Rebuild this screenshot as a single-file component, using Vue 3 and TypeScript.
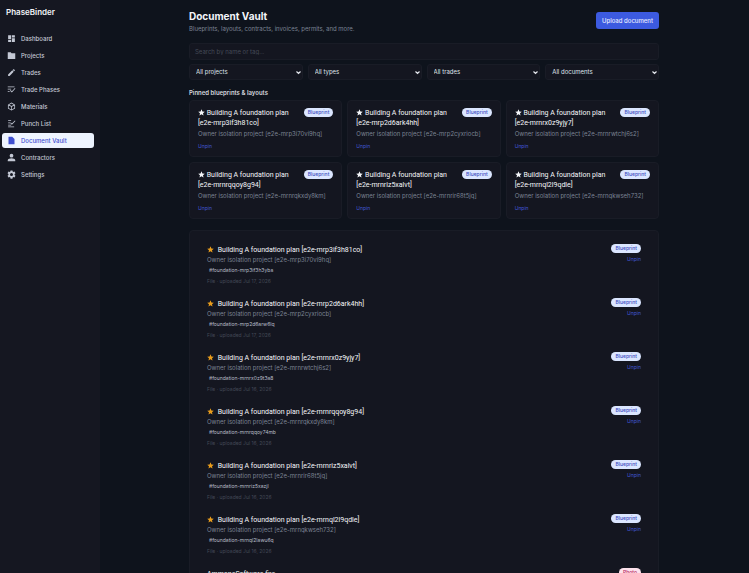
<script setup lang="ts">
import { ref } from 'vue'

interface NavItem {
  label: string
  paths: string[]
}

interface VaultDocument {
  name: string
  project: string
  tag: string
  uploaded: string
  kind: string
  pinned: boolean
}

const navItems: NavItem[] = [
  { label: 'Dashboard', paths: ['M3 13h8V3H3v10zm0 8h8v-6H3v6zm10 0h8V11h-8v10zm0-18v6h8V3h-8z'] },
  { label: 'Projects', paths: ['M2 3h8l2 3h10v15H2z'] },
  { label: 'Trades', paths: ['M3 17.2V21h3.800L17.800 9.900l-3.700-3.700L3 17.200zM20.700 7c.4-.4.4-1 0-1.400l-2.300-2.300c-.4-.4-1-.4-1.400 0l-1.800 1.800 3.700 3.700L20.700 7z'] },
  { label: 'Trade Phases', paths: ['M2 4h18v2H2zM2 10h9v2H2zM2 16h5v2H2zM21 8l1.500 1.500L13 20l-5-5 1.500-1.500 3.500 3.300z'] },
  { label: 'Materials', paths: ['M12 1.500 21.500 7v10.500L12 22.800 2.500 17.500V7zM12 3.900 6 7.300l6 3.400 6-3.400zM4.500 9v7.300l6.500 3.700v-7.300zM19.500 9 13 12.700V20l6.500-3.700z'] },
  { label: 'Punch List', paths: ['M3 3h8v2H3zM3 9h6v2H3zM3 15h8v2H3zM3 20h16v2H3zM21 4l1.500 1.500L13 15l-4-4 1.500-1.500 2.500 2.400z'] },
  { label: 'Document Vault', paths: ['M4 2h10l6 6v14H4z'] },
  { label: 'Contractors', paths: ['M12 12a5 5 0 1 0 0-10 5 5 0 0 0 0 10zm0 2c-4 0-10 2-10 5v3h20v-3c0-3-6-5-10-5z'] },
  { label: 'Settings', paths: ['M9.500 1h5l.6 3.100 2 1.100 3-1 2.500 4.300-2.400 2.100v2.800l2.400 2.100-2.500 4.300-3-1-2 1.100-.6 3.100h-5l-.6-3.100-2-1.100-3 1-2.500-4.300 2.400-2.100v-2.800L1.400 8.500l2.500-4.300 3 1 2-1.100zM12 8a4 4 0 1 0 0 8 4 4 0 0 0 0-8z'] },
]

const filters = ['All projects', 'All types', 'All trades', 'All documents']

const plan = (id: string, project: string, tag: string, uploaded: string): VaultDocument => ({
  name: `Building A foundation plan [e2e-${id}]`,
  project: `Owner isolation project [e2e-${project}]`,
  tag: `#foundation-${tag}`,
  uploaded,
  kind: 'Blueprint',
  pinned: true,
})

const documents = ref<VaultDocument[]>([
  plan('mrp3if3h81co', 'mrp3i70vi9hq', 'mrp3if3h3yba', 'Jul 17, 2026'),
  plan('mrp2d6ark4hh', 'mrp2cyxriocb', 'mrp2d6arw6lq', 'Jul 17, 2026'),
  plan('mrnrx0z9yjy7', 'mrnrwtchj6s2', 'mrnrx0z9t3a8', 'Jul 16, 2026'),
  plan('mrnrqqoy8g94', 'mrnrqkxdy8km', 'mrnrqqoy74mb', 'Jul 16, 2026'),
  plan('mrnriz5xalvt', 'mrnrir68t5jq', 'mrnriz5xazjl', 'Jul 16, 2026'),
  plan('mrnql2l9qdle', 'mrnqkwseh732', 'mrnql2lawu6q', 'Jul 16, 2026'),
  { name: 'AmmoneSoftware.fire', project: '', tag: '', uploaded: '', kind: 'Photo', pinned: false },
])

const pinned = documents.value.filter((d) => d.pinned)
const star = 'M12 1l3.200 7.400 8 .7-6.100 5.300 1.900 7.900-7-4.200-7 4.200 1.900-7.900L.8 9.100l8-.7z'
</script>

<template>
  <div class="shell">
    <aside class="sidebar">
      <div class="brand">PhaseBinder</div>
      <nav class="nav" aria-label="Main">
        <a v-for="item in navItems" :key="item.label" href="#" class="nav-link"
          :class="{ active: item.label === 'Document Vault' }">
          <svg class="nav-icon" viewBox="0 0 24 24" aria-hidden="true">
            <path v-for="d in item.paths" :key="d" :d="d" fill="currentColor" fill-rule="evenodd" />
          </svg>
          <span>{{ item.label }}</span>
        </a>
      </nav>
    </aside>

    <main class="main">
      <div class="content">
        <header class="header">
          <div>
            <h1>Document Vault</h1>
            <p class="subtitle">Blueprints, layouts, contracts, invoices, permits, and more.</p>
          </div>
          <button type="button" class="upload">Upload document</button>
        </header>

        <input class="search" type="search" aria-label="Search documents" placeholder="Search by name or tag..." />

        <div class="filters">
          <div v-for="f in filters" :key="f" class="filter">
            <select :aria-label="f">
              <option>{{ f }}</option>
            </select>
            <svg class="chevron" viewBox="0 0 10 10" aria-hidden="true">
              <path d="M1 3l4 4 4-4" fill="none" stroke="currentColor" stroke-width="2.400" />
            </svg>
          </div>
        </div>

        <h2>Pinned blueprints &amp; layouts</h2>
        <div class="cards">
          <article v-for="doc in pinned" :key="doc.name" class="card">
            <div class="card-body">
              <h3 class="name">
                <svg class="star" viewBox="0 0 24 24" aria-hidden="true"><path :d="star" fill="currentColor" /></svg>
                {{ doc.name }}
              </h3>
              <span class="badge">{{ doc.kind }}</span>
            </div>
            <p class="project">{{ doc.project }}</p>
            <button type="button" class="unpin">Unpin</button>
          </article>
        </div>

        <ul class="list">
          <li v-for="doc in documents" :key="doc.name" class="row">
            <div class="details">
              <h3 class="name">
                <svg v-if="doc.pinned" class="star gold" viewBox="0 0 24 24" aria-hidden="true"><path :d="star" fill="currentColor" /></svg>
                {{ doc.name }}
              </h3>
              <template v-if="doc.pinned">
                <p class="project">{{ doc.project }}</p>
                <p class="tag">{{ doc.tag }}</p>
                <p class="meta">File · uploaded {{ doc.uploaded }}</p>
              </template>
            </div>
            <div class="actions">
              <span class="badge" :class="{ photo: doc.kind === 'Photo' }">{{ doc.kind }}</span>
              <button v-if="doc.pinned" type="button" class="unpin">Unpin</button>
            </div>
          </li>
        </ul>
      </div>
    </main>
  </div>
</template>

<style>
body {
  margin: 0;
  background: #0e131c;
}
</style>

<style scoped>
.shell {
  display: flex;
  height: 100vh;
  overflow: hidden;
  background: #0e131c;
  color: #e6e9ef;
  font-family: Inter, "Liberation Sans", sans-serif;
  font-size: 6px;
  line-height: 10px;
}
.shell * {
  box-sizing: border-box;
}
h1, h2, h3, p, ul {
  margin: 0;
  padding: 0;
}
button, input, select {
  font: inherit;
}
button {
  cursor: pointer;
}
.sidebar {
  flex: none;
  width: 100px;
  padding: 7px 6px 0 2px;
  background: #151721;
}
.brand {
  padding-left: 4px;
  font-size: 8px;
  font-weight: 600;
  color: #f1f3f7;
}
.nav {
  display: flex;
  flex-direction: column;
  gap: 2px;
  margin-top: 14px;
}
.nav-link {
  display: flex;
  align-items: center;
  gap: 5px;
  height: 15px;
  padding-left: 5px;
  border-radius: 3px;
  color: #c3c8d4;
  font-weight: 500;
  text-decoration: none;
}
.nav-link.active {
  background: #eef4ff;
  color: #3f4fd0;
}
.nav-icon {
  width: 9px;
  height: 9px;
}
.main {
  flex: 1;
  min-width: 0;
  padding: 0 13px 0 12px;
}
.content {
  max-width: 470px;
  margin: 0 auto;
  padding-top: 10px;
}
.header {
  display: flex;
  justify-content: space-between;
  align-items: flex-start;
  min-height: 24px;
}
h1 {
  font-family: Roboto, Inter, sans-serif;
  font-size: 10px;
  line-height: 13px;
  font-weight: 700;
  font-family: Inter, "Liberation Sans", sans-serif;
  color: #f4f6fa;
}
.subtitle {
  margin-top: 1px;
  color: #7b8393;
}
.upload {
  height: 17px;
  margin-top: 2px;
  padding: 0 6px;
  border: 0;
  border-radius: 3px;
  background: #3c5ae0;
  color: #e8edff;
  font-weight: 500;
}
.search {
  display: block;
  width: 100%;
  height: 17px;
  margin-top: 9px;
  padding: 0 5px;
  border: 1px solid #191c26;
  border-radius: 3px;
  background: #141620;
  color: #e6e9ef;
}
.search::placeholder {
  color: #444a57;
  opacity: 1;
}
.filters {
  display: grid;
  grid-template-columns: repeat(4, 1fr);
  gap: 5px;
  margin-top: 4px;
}
.filter {
  display: grid;
  align-items: center;
}
.filter select {
  grid-area: 1 / 1;
  width: 100%;
  height: 16px;
  padding: 0 6px;
  border: 1px solid #191c26;
  border-radius: 3px;
  background: #141620;
  color: #dfe2e9;
  appearance: none;
}
.chevron {
  grid-area: 1 / 1;
  justify-self: end;
  width: 5px;
  height: 5px;
  margin-right: 2px;
  color: #e6e9ef;
  pointer-events: none;
}
h2 {
  margin-top: 8px;
  font-size: 6px;
  line-height: 10px;
  font-weight: 600;
  color: #d3d7df;
}
.cards {
  display: grid;
  grid-template-columns: repeat(3, 1fr);
  gap: 5px;
  margin-top: 2px;
}
.card {
  height: 57px;
  padding: 7px 8px;
  border: 1px solid #191c26;
  border-radius: 4px;
  background: #141620;
}
.card-body {
  display: flex;
  justify-content: space-between;
  align-items: flex-start;
  gap: 5px;
}
.name {
  font-family: Roboto, Inter, sans-serif;
  font-size: 7px;
  line-height: 10px;
  font-weight: 400;
  color: #f4f6fa;
}
.star {
  width: 7px;
  height: 7px;
  vertical-align: -1px;
}
.gold {
  margin-right: 2px;
  color: #e89c1c;
}
.badge {
  flex: none;
  height: 9px;
  padding: 0 4px;
  border-radius: 5px;
  background: #dbe6ff;
  color: #3b4cc0;
  font-size: 5px;
  line-height: 9px;
  font-weight: 500;
}
.badge.photo {
  background: #fce1ec;
  color: #b8265c;
}
.project {
  margin-top: 1px;
  color: #7b8393;
}
.unpin {
  display: block;
  padding: 0;
  border: 0;
  background: none;
  color: #4256d6;
  font-size: 5px;
  line-height: 10px;
}
.card .unpin {
  margin-top: 2px;
}
.list {
  margin-top: 11px;
  padding: 7px 17px;
  border: 1px solid #191c26;
  border-radius: 4px;
  background: #141620;
  list-style: none;
}
.row {
  display: flex;
  justify-content: space-between;
  height: 54px;
  padding-top: 6px;
}
.details {
  padding-top: 1px;
}
.details .project {
  margin-top: 0;
}
.tag {
  padding-left: 2px;
  color: #b9bec9;
  font-size: 5px;
}
.meta {
  margin-top: 1px;
  color: #434956;
  font-size: 5px;
}
.actions {
  display: flex;
  flex-direction: column;
  align-items: flex-end;
  gap: 1px;
}
</style>
